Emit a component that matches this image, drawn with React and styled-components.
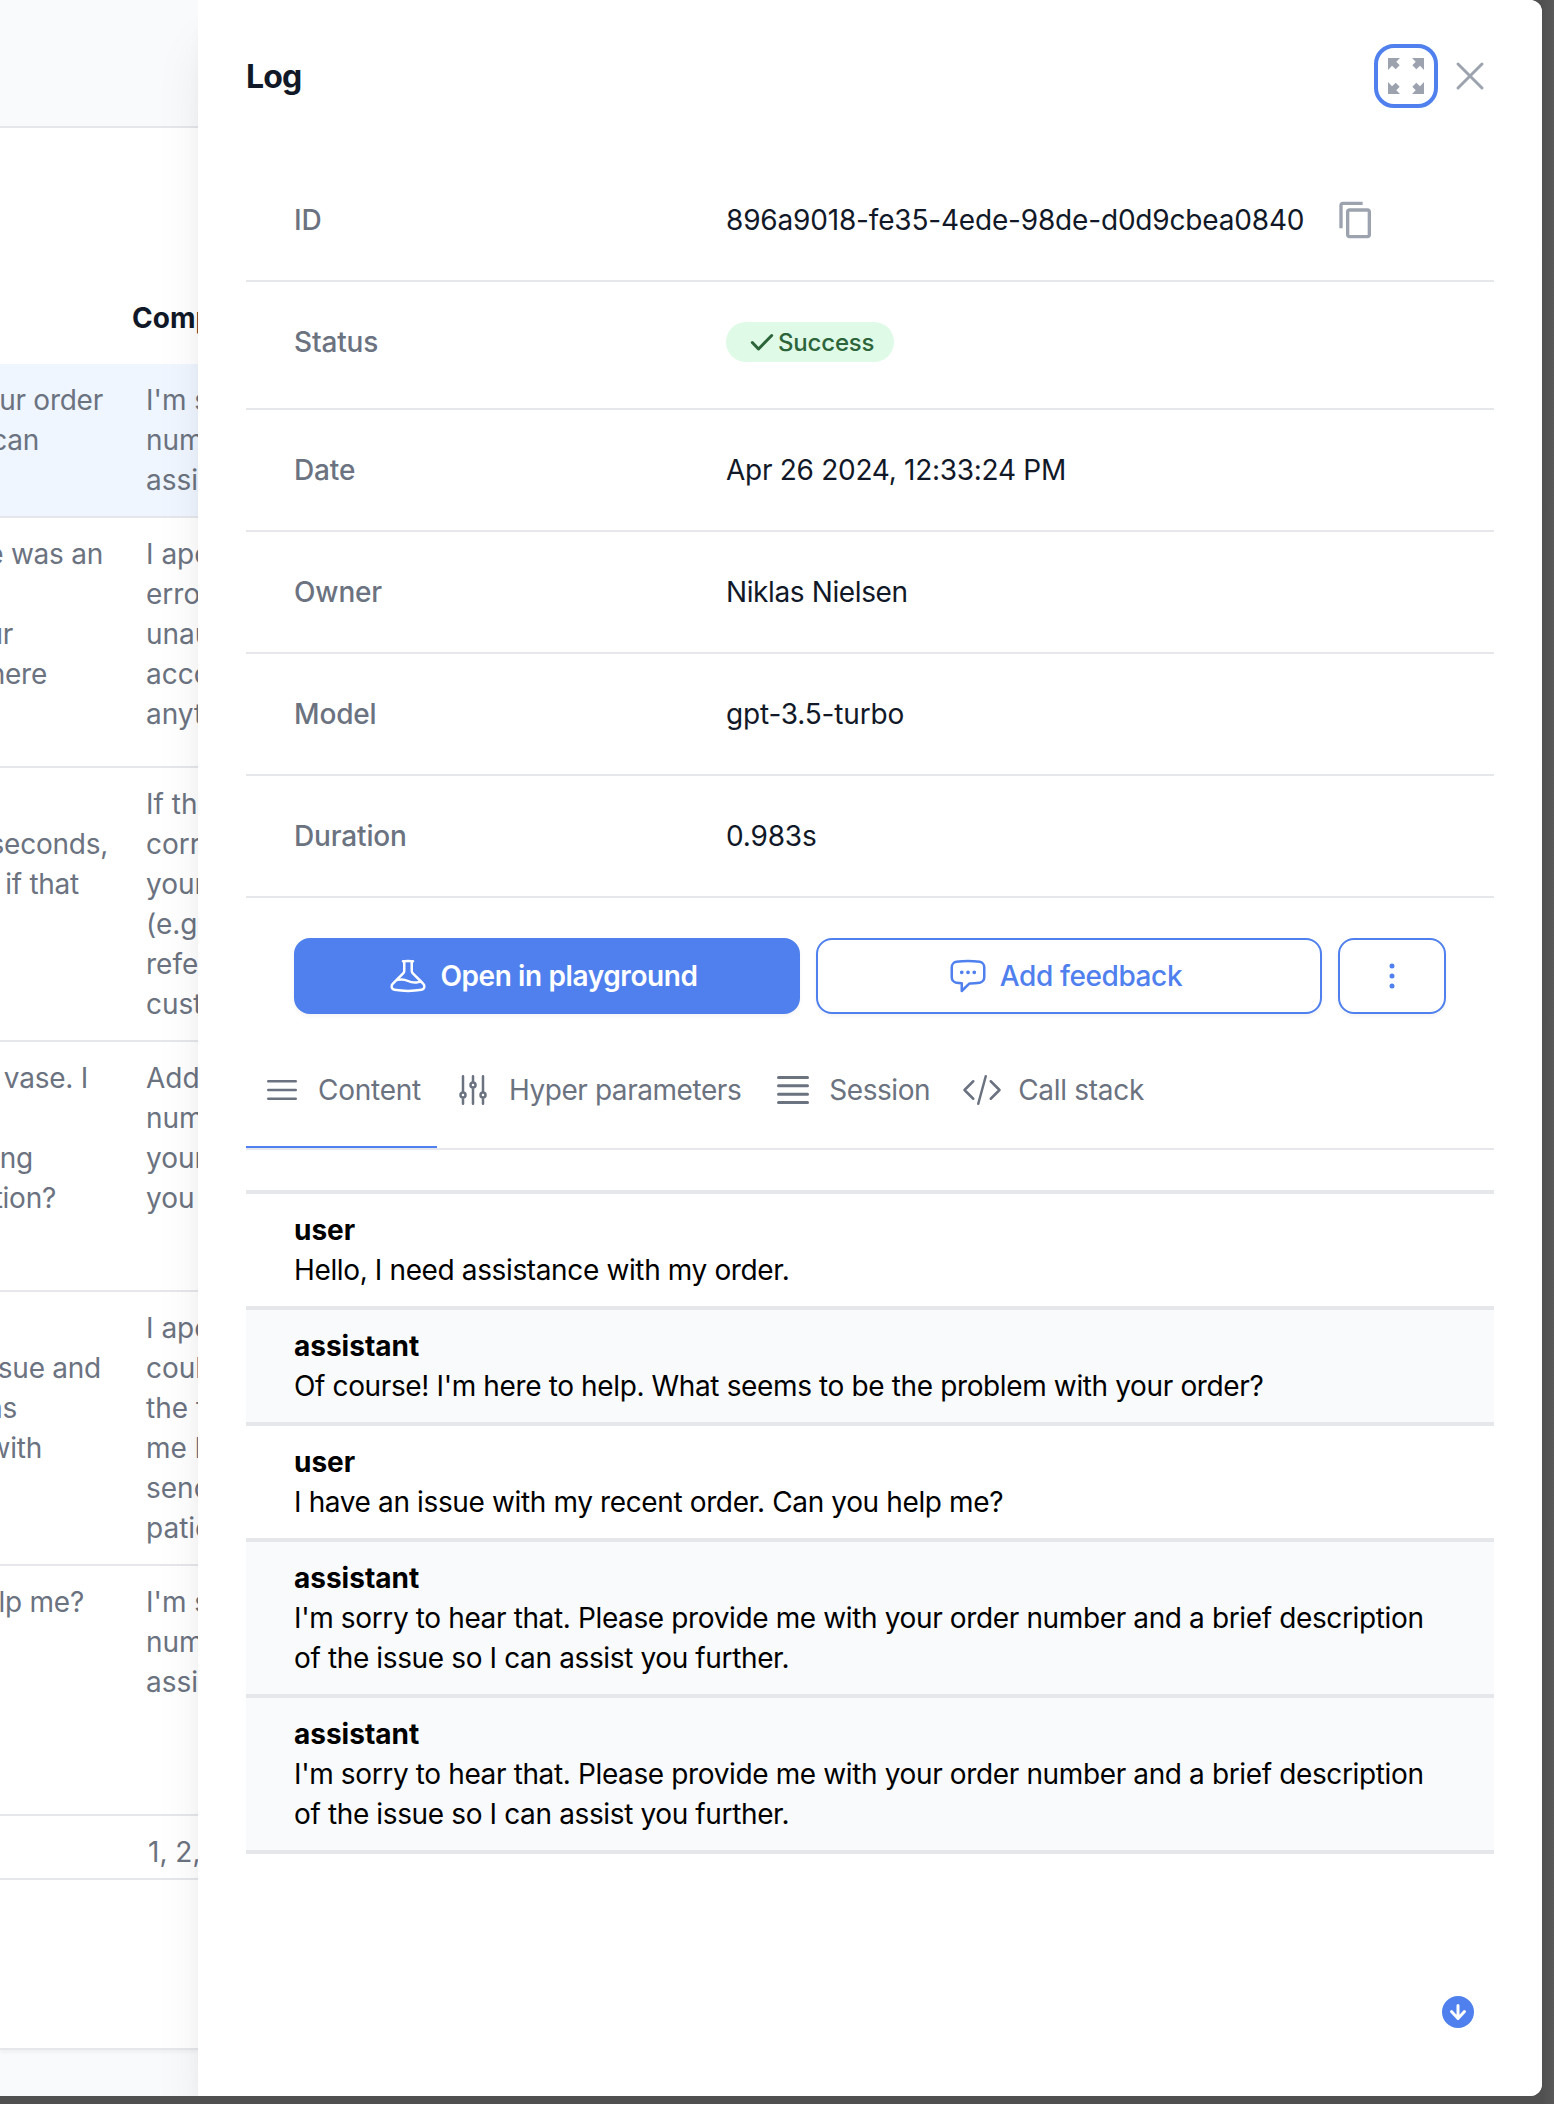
import React from "react";
import styled, { createGlobalStyle } from "styled-components";
import {
  HiOutlineBeaker,
  HiOutlineChatBubbleLeftEllipsis,
  HiOutlineXMark,
  HiOutlineBars3,
  HiMiniBars4,
  HiOutlineAdjustmentsVertical,
  HiOutlineCodeBracket,
  HiEllipsisVertical,
} from "react-icons/hi2";
import { MdContentCopy } from "react-icons/md";

const GlobalStyle = createGlobalStyle`
  *, *::before, *::after { box-sizing: border-box; }
  body {
    margin: 0;
    background: #575757;
    font-family: Inter, "Liberation Sans", sans-serif;
    font-size: 28px;
    line-height: 40px;
  }
  button { font: inherit; letter-spacing: inherit; margin: 0; padding: 0; background: none; border: 0; }
`;

const Window = styled.div`
  display: flex;
  height: 2096px;
  overflow: hidden;
  border-radius: 0 12px 12px 0;
  background: #f9fafb;
`;

const Backdrop = styled.div`
  padding: 0 12px 8px 0;
  background: linear-gradient(to right, #505050 1542px, #595959 1554px);
`;

const Page = styled.main`
  flex: 0 0 198px;
  min-width: 0;
  display: flex;
  flex-direction: column;
  overflow: hidden;
  color: #6b7280;
`;

const PageHeader = styled.div`
  flex: 0 0 128px;
  border-bottom: 2px solid #e5e7eb;
`;

const TableCard = styled.section`
  flex: 0 0 1922px;
  padding-top: 150px;
  background: #fff;
  border-bottom: 2px solid #e5e7eb;
  box-shadow: 0 2px 4px rgba(0, 0, 0, 0.05);
`;

const TableHead = styled.div`
  height: 86px;
  padding: 20px 0 0 132px;
  color: #111827;
  font-weight: 650;
  white-space: nowrap;
`;

const TableRow = styled.div`
  display: grid;
  grid-template-columns: ${(p) => p.$split || 146}px 1fr;
  height: ${(p) => p.$height}px;
  padding-top: 16px;
  background: ${(p) => (p.$active ? "#eff6ff" : "#fff")};
  border-bottom: 2px solid #e5e7eb;
`;

const CellLine = styled.div`
  height: 40px;
  white-space: nowrap;
`;

const TailLine = styled(CellLine)`
  display: flex;
  justify-content: flex-end;
  width: ${(p) => p.$end}px;
  letter-spacing: -0.25px;
`;

const Drawer = styled.aside`
  position: relative;
  flex: 1;
  padding: 0 48px;
  background: #fff;
  box-shadow: 0 40px 50px -10px rgba(0, 0, 0, 0.1), 0 16px 20px -12px rgba(0, 0, 0, 0.1);
`;

const DrawerHeader = styled.header`
  display: flex;
  align-items: center;
  height: 152px;
`;

const Title = styled.h2`
  flex: 1;
  margin: 0;
  padding-top: 2px;
  color: #111827;
  font-size: 32px;
  font-weight: 650;
  letter-spacing: -0.8px;
`;

const ExpandButton = styled.button`
  display: flex;
  align-items: center;
  justify-content: center;
  width: 64px;
  height: 64px;
  margin-right: 8px;
  color: #9ca3af;
  border: 4px solid #4f80ee;
  border-radius: 20px;
`;

const CloseButton = styled.button`
  display: flex;
  color: #9ca3af;
`;

const Details = styled.dl`
  margin: 8px 0 0;
`;

const DetailRow = styled.div`
  display: grid;
  grid-template-columns: 432px 1fr;
  height: ${(p) => p.$height || 122}px;
  padding: 40px 48px 0;
  border-bottom: 2px solid #e5e7eb;
`;

const Term = styled.dt`
  color: #6b7280;
  font-weight: 500;
  letter-spacing: -0.15px;
`;

const Value = styled.dd`
  display: flex;
  align-items: center;
  height: 40px;
  margin: 0;
  color: #111827;
  letter-spacing: ${(p) => p.$tracking || -0.18}px;
`;

const CopyIcon = styled(MdContentCopy)`
  margin-left: 32px;
  color: #9ca3af;
`;

const Badge = styled.span`
  display: flex;
  align-items: center;
  height: 40px;
  padding: 0 20px;
  border-radius: 20px;
  background: #e0fae8;
  color: #2c6539;
  font-size: 24px;
  font-weight: 500;
`;

const BadgeLabel = styled.span`
  padding-top: 2px;
`;

const Actions = styled.div`
  display: grid;
  grid-template-columns: 1fr 1fr 108px;
  gap: 16px;
  padding: 40px 48px 0;
`;

const Button = styled.button`
  display: flex;
  align-items: center;
  justify-content: center;
  gap: 12px;
  height: 76px;
  padding-right: ${(p) => (p.$icon ? 0 : 8)}px;
  border: 2px solid #4f80ee;
  border-radius: 16px;
  background: ${(p) => (p.$primary ? "#4f80ee" : "#fff")};
  color: ${(p) => (p.$primary ? "#fff" : "#4f80ee")};
  font-weight: ${(p) => (p.$primary ? 600 : 500)};
  letter-spacing: -0.4px;
  box-shadow: 0 2px 4px rgba(0, 0, 0, 0.05);
`;

const Tabs = styled.nav`
  display: flex;
  height: 120px;
  margin-top: 16px;
  border-bottom: 2px solid #e5e7eb;
`;

const Tab = styled.button`
  display: flex;
  align-items: center;
  gap: 16px;
  padding: 4px 16px 0;
  color: #6b7280;
  letter-spacing: ${(p) => p.$tracking || -0.44}px;
  border-bottom: 2px solid ${(p) => (p.$active ? "#4f80ee" : "transparent")};
`;

const Messages = styled.div`
  margin-top: 40px;
  border-top: 4px solid #e5e7eb;
`;

const Message = styled.article`
  padding: 16px 48px;
  background: ${(p) => (p.$shaded ? "#f9fafb" : "#fff")};
  border-bottom: 4px solid #e5e7eb;
  color: #000;
`;

const Role = styled.div`
  font-weight: 700;
`;

const MessageText = styled.div`
  letter-spacing: -0.37px;
`;

const ScrollDown = styled.button`
  position: absolute;
  right: 64px;
  bottom: 64px;
  display: flex;
  color: #4f80ee;
`;

const ROWS = [
  { height: 154, active: true, left: [["ur order", 103], ["can", 39]], right: ["I'm sorry", "number", "assist"] },
  { height: 250, left: [["e was an", 103], null, ["ur", 13], ["here", 47]], right: ["I apologize", "error", "unauthorized", "account", "anything"] },
  { height: 274, left: [null, ["seconds,", 108], ["if that", 79]], right: ["If that", "correct", "your", "(e.g.", "reference", "customer"] },
  { height: 250, left: [["vase. I", 88], null, ["ng", 33], ["tion?", 56]], right: ["Additional", "number", "your", "you"] },
  { height: 274, left: [null, ["sue and", 101], ["as", 17], ["with", 42]], right: ["I apologize", "could", "the time", "me know", "send", "patience"] },
  { height: 250, left: [["lp me?", 84]], right: ["I'm sorry", "number", "assist"] },
  { height: 64, split: 148, left: [], right: ["1, 2, 3"] },
];

const MESSAGES = [
  ["user", "Hello, I need assistance with my order."],
  ["assistant", "Of course! I'm here to help. What seems to be the problem with your order?"],
  ["user", "I have an issue with my recent order. Can you help me?"],
  ["assistant", "I'm sorry to hear that. Please provide me with your order number and a brief description of the issue so I can assist you further."],
  ["assistant", "I'm sorry to hear that. Please provide me with your order number and a brief description of the issue so I can assist you further."],
];

function ExpandIcon() {
  const corner = "0,0 12,0 8.3,3.7 11.7,7.2 7.7,11.2 4,7.8 0,12";
  return (
    <svg width="36" height="36" viewBox="0 0 36 36" fill="currentColor">
      <polygon points={corner} />
      <polygon points={corner} transform="matrix(-1 0 0 1 36 0)" />
      <polygon points={corner} transform="matrix(1 0 0 -1 0 36)" />
      <polygon points={corner} transform="matrix(-1 0 0 -1 36 36)" />
    </svg>
  );
}

function CheckIcon() {
  return (
    <svg width="32" height="32" viewBox="0 0 32 32" fill="none" stroke="currentColor" strokeWidth="3" strokeLinecap="round" strokeLinejoin="round">
      <path d="M6.3 16.5l6.2 6.5L25.7 9.5" />
    </svg>
  );
}

function DownIcon() {
  return (
    <svg width="40" height="40" viewBox="0 0 20 20" fill="currentColor">
      <path fillRule="evenodd" clipRule="evenodd" d="M10 18a8 8 0 1 0 0-16 8 8 0 0 0 0 16Zm.75-11.25a.75.75 0 0 0-1.5 0v4.59L7.3 9.24a.75.75 0 0 0-1.1 1.02l3.25 3.5a.75.75 0 0 0 1.1 0l3.25-3.5a.75.75 0 1 0-1.1-1.02l-1.95 2.1V6.75Z" />
    </svg>
  );
}

function LogsTable() {
  return (
    <Page>
      <PageHeader />
      <TableCard>
        <TableHead>Completion</TableHead>
        {ROWS.map((row, i) => (
          <TableRow key={i} $height={row.height} $active={row.active} $split={row.split}>
            <div>
              {row.left.map((line, j) => (
                <TailLine key={j} $end={line ? line[1] : 0}>{line && line[0]}</TailLine>
              ))}
            </div>
            <div>
              {row.right.map((line, j) => (
                <CellLine key={j}>{line}</CellLine>
              ))}
            </div>
          </TableRow>
        ))}
      </TableCard>
    </Page>
  );
}

export default function App() {
  return (
    <>
      <GlobalStyle />
      <Backdrop>
        <Window>
          <LogsTable />
          <Drawer>
            <DrawerHeader>
              <Title>Log</Title>
              <ExpandButton><ExpandIcon /></ExpandButton>
              <CloseButton><HiOutlineXMark size={48} /></CloseButton>
            </DrawerHeader>
            <Details>
              <DetailRow>
                <Term>ID</Term>
                <Value>896a9018-fe35-4ede-98de-d0d9cbea0840<CopyIcon size={40} /></Value>
              </DetailRow>
              <DetailRow $height={128}>
                <Term>Status</Term>
                <Value><Badge><CheckIcon /><BadgeLabel>Success</BadgeLabel></Badge></Value>
              </DetailRow>
              <DetailRow>
                <Term>Date</Term>
                <Value $tracking={-0.28}>Apr 26 2024, 12:33:24 PM</Value>
              </DetailRow>
              <DetailRow>
                <Term>Owner</Term>
                <Value $tracking={-0.38}>Niklas Nielsen</Value>
              </DetailRow>
              <DetailRow>
                <Term>Model</Term>
                <Value>gpt-3.5-turbo</Value>
              </DetailRow>
              <DetailRow>
                <Term>Duration</Term>
                <Value>0.983s</Value>
              </DetailRow>
            </Details>
            <Actions>
              <Button $primary><HiOutlineBeaker size={40} />Open in playground</Button>
              <Button><HiOutlineChatBubbleLeftEllipsis size={40} />Add feedback</Button>
              <Button $icon><HiEllipsisVertical size={40} /></Button>
            </Actions>
            <Tabs>
              <Tab $active $tracking={-0.25}><HiOutlineBars3 size={40} />Content</Tab>
              <Tab><HiOutlineAdjustmentsVertical size={40} />Hyper parameters</Tab>
              <Tab><HiMiniBars4 size={40} />Session</Tab>
              <Tab $tracking={-0.3}><HiOutlineCodeBracket size={40} />Call stack</Tab>
            </Tabs>
            <Messages>
              {MESSAGES.map(([role, text], i) => (
                <Message key={i} $shaded={role === "assistant"}>
                  <Role>{role}</Role>
                  <MessageText>{text}</MessageText>
                </Message>
              ))}
            </Messages>
            <ScrollDown><DownIcon /></ScrollDown>
          </Drawer>
        </Window>
      </Backdrop>
    </>
  );
}
